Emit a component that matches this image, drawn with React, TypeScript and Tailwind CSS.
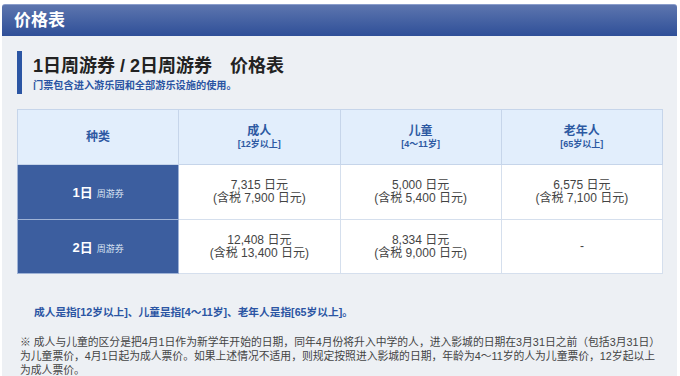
import React from 'react';

const rows = [
  {
    day: '1日',
    prices: [
      ['7,315 日元', '(含税 7,900 日元)'],
      ['5,000 日元', '(含税 5,400 日元)'],
      ['6,575 日元', '(含税 7,100 日元)'],
    ],
  },
  {
    day: '2日',
    prices: [
      ['12,408 日元', '(含税 13,400 日元)'],
      ['8,334 日元', '(含税 9,000 日元)'],
      null,
    ],
  },
];

const heads = [
  ['成人', '[12岁以上]'],
  ['儿童', '[4～11岁]'],
  ['老年人', '[65岁以上]'],
];

export default function App() {
  return (
    <div className="w-[680px] h-[376px] overflow-hidden bg-white pt-1 pl-[2px] font-['Liberation_Sans','Noto_Sans_CJK_SC',sans-serif]">
      <div className="w-[675px] h-8 rounded-t-[3px] border-t border-[#8a9dcb] bg-gradient-to-b from-[#5d75ae] to-[#2f4f98] flex items-center pl-3">
        <span className="text-white text-[17px] font-bold leading-none">价格表</span>
      </div>
      <div className="w-[675px] h-[340px] bg-[#edf0f4] pt-[15px] pl-[15px]">
        <div className="border-l-[5px] border-[#2b55a3] pl-[11px] pt-[2px] pb-[1px]">
          <h1 className="text-[18px] font-bold leading-[26px] text-[#222]">
            1日周游券 / 2日周游券　价格表
          </h1>
          <p className="text-[10.2px] font-bold leading-[14px] text-[#2b55a3]">
            门票包含进入游乐园和全部游乐设施的使用。
          </p>
        </div>

        <table className="mt-[15px] w-[646px] table-fixed border-collapse border border-[#c6d5ea]">
          <thead>
            <tr className="h-[55px] bg-[#e2eefc]">
              <th className="border border-[#c6d5ea] text-[12px] font-bold text-[#2d59a2]">种类</th>
              {heads.map(([name, age]) => (
                <th key={name} className="border border-[#c6d5ea] font-bold text-[#2d59a2]">
                  <div className="text-[12px] leading-[14px]">{name}</div>
                  <div className="text-[9px] leading-[12px]">{age}</div>
                </th>
              ))}
            </tr>
          </thead>
          <tbody>
            {rows.map((row, i) => (
              <tr key={row.day} className={i === 0 ? 'h-[55px]' : 'h-[54px]'}>
                <td className="border border-[#9fb3d6] bg-[#3c5e9f] text-white text-center">
                  <span className="text-[13px] font-bold">{row.day}</span>
                  <span className="text-[9px] ml-1 text-[#dbe4f3]">周游券</span>
                </td>
                {row.prices.map((p, j) => (
                  <td
                    key={j}
                    className="border border-[#d5dfed] bg-white text-center text-[12px] leading-[13px] text-[#444]"
                  >
                    {p ? (
                      <>
                        <div>{p[0]}</div>
                        <div>{p[1]}</div>
                      </>
                    ) : (
                      '-'
                    )}
                  </td>
                ))}
              </tr>
            ))}
          </tbody>
        </table>

        <p className="mt-[31px] pl-[17px] text-[10.7px] font-bold leading-[14px] text-[#2b55a3]">
          成人是指[12岁以上]、儿童是指[4～11岁]、老年人是指[65岁以上]。
        </p>
        <p className="mt-[16px] pl-[3px] text-[10.8px] leading-[14px] text-[#444] whitespace-nowrap">
          ※ 成人与儿童的区分是把4月1日作为新学年开始的日期，同年4月份将升入中学的人，进入影城的日期在3月31日之前（包括3月31日）
          <br />
          为儿童票价，4月1日起为成人票价。如果上述情况不适用，则规定按照进入影城的日期，年龄为4～11岁的人为儿童票价，12岁起以上
          <br />
          为成人票价。
        </p>
      </div>
    </div>
  );
}
